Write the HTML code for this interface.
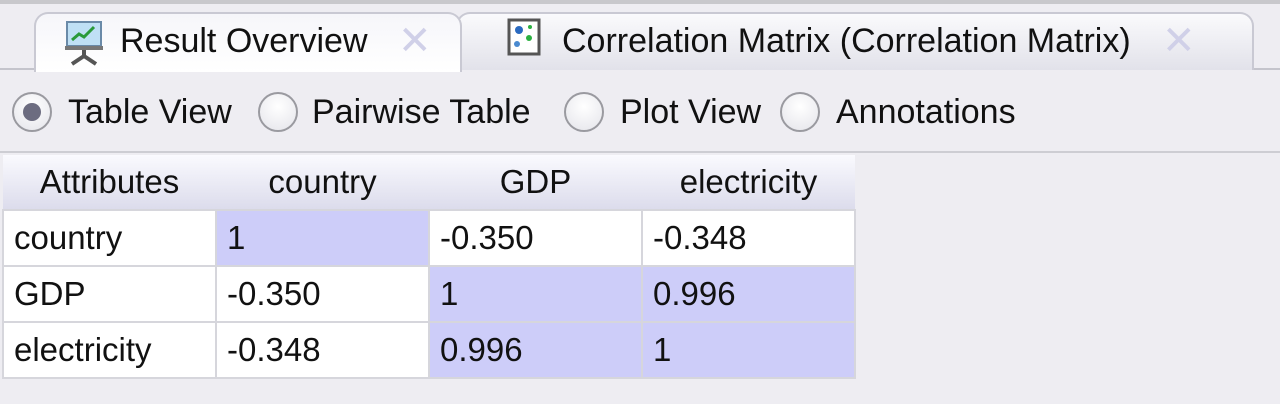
<!DOCTYPE html>
<html><head><style>
body{margin:0;width:1280px;height:404px;background:#eeedf2;font-family:"Liberation Sans",sans-serif;position:relative;overflow:hidden;color:#111}
.abs{position:absolute}
.tab{position:absolute;top:12px;height:58px;border:2px solid #c9c9d3;border-bottom:none;border-radius:14px 14px 0 0;box-sizing:border-box;font-size:34px}
table{position:absolute;left:2px;top:155px;border-collapse:collapse;font-size:33px;table-layout:fixed;width:854px}
td{height:56px;border:2px solid #d6d6dc;padding:0 0 0 10px;box-sizing:border-box;background:#fff;overflow:hidden;white-space:nowrap}
th{height:54px;font-weight:normal;background:linear-gradient(#fafafe,#dcdcec);border:none;padding:0}
td.p{background:#cdcdf9}
.radio{position:absolute;top:92px;width:40px;height:40px;border-radius:50%;border:2px solid #9a9aa0;box-sizing:border-box;background:radial-gradient(circle at 50% 35%,#fff,#e4e4ea)}
.rl{position:absolute;top:93px;font-size:34px}
</style></head><body>
<div class="abs" style="left:0;top:0;width:1280px;height:4px;background:#c8c8cc"></div>
<div class="abs" style="left:0;top:68px;width:1280px;height:2px;background:#c4c4cc"></div>
<div class="tab" style="left:34px;width:428px;background:linear-gradient(#f6f6fa,#fff);top:12px;height:60px;z-index:2">
<svg class="abs" style="left:28px;top:6px" width="42" height="46"><rect x="3" y="2" width="34" height="24" fill="#bfe0f5" stroke="#6a8aa8" stroke-width="2"/><polyline points="8,20 15,14 20,17 30,7" fill="none" stroke="#2a9a3a" stroke-width="3"/><rect x="1" y="26" width="38" height="4" fill="#777"/><path d="M20 30 L20 36 M20 36 L8 44 M20 36 L32 44" stroke="#555" stroke-width="4"/></svg>
<span class="abs" style="left:84px;top:8px">Result Overview</span>
<span class="abs" style="left:362px;top:4px;color:#d0d0e8;font-size:40px">✕</span></div>
<div class="tab" style="left:456px;width:798px;background:linear-gradient(#fafafc,#e2e2ea)">
<svg class="abs" style="left:48px;top:4px" width="38" height="42"><rect x="3" y="2" width="30" height="34" fill="#fff" stroke="#555" stroke-width="3"/><circle cx="13" cy="12" r="4" fill="#2a6ac0"/><circle cx="23" cy="20" r="3" fill="#2ab040"/><circle cx="11" cy="26" r="3" fill="#4a8ad0"/><circle cx="24" cy="9" r="2" fill="#2ab040"/></svg>
<span class="abs" style="left:104px;top:8px">Correlation Matrix (Correlation Matrix)</span>
<span class="abs" style="left:704px;top:4px;color:#d0d0e8;font-size:40px">✕</span></div>
<div class="radio" style="left:12px"><div class="abs" style="left:9px;top:9px;width:18px;height:18px;border-radius:50%;background:#6c6c80"></div></div>
<span class="rl" style="left:68px">Table View</span>
<div class="radio" style="left:258px"></div><span class="rl" style="left:312px">Pairwise Table</span>
<div class="radio" style="left:564px"></div><span class="rl" style="left:620px">Plot View</span>
<div class="radio" style="left:780px"></div><span class="rl" style="left:836px">Annotations</span>
<div class="abs" style="left:0;top:151px;width:1280px;height:2px;background:#cdcdd3"></div>
<table>
<tr><th>Attributes</th><th>country</th><th>GDP</th><th>electricity</th></tr>
<tr><td>country</td><td class="p">1</td><td>-0.350</td><td>-0.348</td></tr>
<tr><td>GDP</td><td>-0.350</td><td class="p">1</td><td class="p">0.996</td></tr>
<tr><td>electricity</td><td>-0.348</td><td class="p">0.996</td><td class="p">1</td></tr>
</table>
</body></html>
